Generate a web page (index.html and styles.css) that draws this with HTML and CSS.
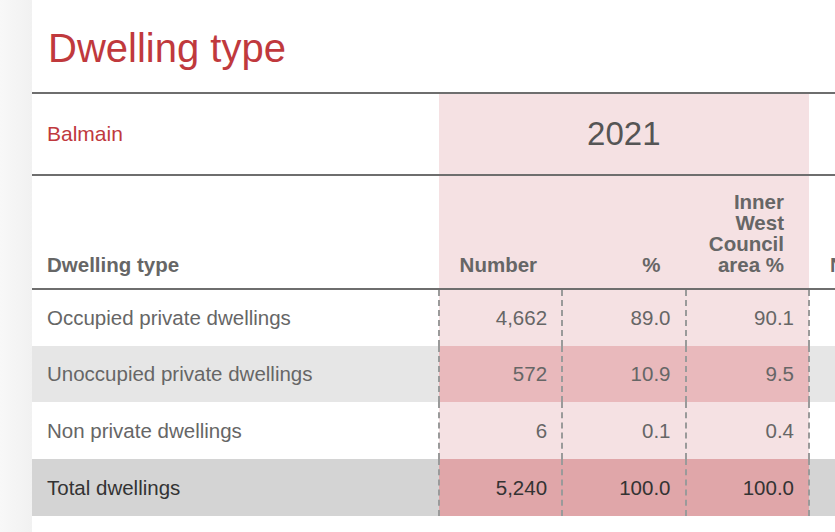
FILE: index.html
```html
<!DOCTYPE html>
<html lang="en">
<head>
<meta charset="utf-8">
<title>Dwelling type</title>
<link rel="stylesheet" href="styles.css">
</head>
<body>
<div class="page">
  <div class="gutter"></div>
  <main class="card">
    <h1 class="title">Dwelling type</h1>
    <table class="data">
      <colgroup>
        <col class="c-label">
        <col class="c-num">
        <col class="c-num">
        <col class="c-num">
        <col class="c-num">
        <col class="c-num">
      </colgroup>
      <thead>
        <tr class="year-row">
          <th class="area">Balmain</th>
          <th class="year" colspan="3">2021</th>
          <th class="year-next" colspan="2"></th>
        </tr>
        <tr class="head-row">
          <th class="label-head">Dwelling type</th>
          <th class="num-head pink">Number</th>
          <th class="num-head pink">%</th>
          <th class="num-head pink">Inner West Council area %</th>
          <th class="num-head">Number</th>
          <th class="num-head">%</th>
        </tr>
      </thead>
      <tbody>
        <tr class="row">
          <td class="label">Occupied private dwellings</td>
          <td class="num">4,662</td>
          <td class="num">89.0</td>
          <td class="num last">90.1</td>
          <td class="num rest"></td>
          <td class="num rest"></td>
        </tr>
        <tr class="row alt">
          <td class="label">Unoccupied private dwellings</td>
          <td class="num">572</td>
          <td class="num">10.9</td>
          <td class="num last">9.5</td>
          <td class="num rest"></td>
          <td class="num rest"></td>
        </tr>
        <tr class="row">
          <td class="label">Non private dwellings</td>
          <td class="num">6</td>
          <td class="num">0.1</td>
          <td class="num last">0.4</td>
          <td class="num rest"></td>
          <td class="num rest"></td>
        </tr>
        <tr class="row total">
          <td class="label">Total dwellings</td>
          <td class="num">5,240</td>
          <td class="num">100.0</td>
          <td class="num last">100.0</td>
          <td class="num rest"></td>
          <td class="num rest"></td>
        </tr>
      </tbody>
    </table>
  </main>
</div>
</body>
</html>
```

FILE: styles.css
```css
* { box-sizing: border-box; }

html, body {
  margin: 0;
  padding: 0;
  background: #ffffff;
}

body {
  font-family: "Liberation Sans", Arial, sans-serif;
  color: #666666;
  overflow: hidden;
}

.page {
  display: flex;
  width: 835px;
  height: 532px;
}

.gutter {
  flex: 0 0 32px;
  background: linear-gradient(to right, #f8f8f8, #f1f1f1);
}

.card {
  flex: 1 1 auto;
  overflow: hidden;
  background: #ffffff;
}

.title {
  margin: 0;
  padding: 25px 0 21px 16px;
  font-size: 40px;
  line-height: 46px;
  font-weight: normal;
  color: #c0393d;
  white-space: nowrap;
}

.data {
  border-collapse: collapse;
  table-layout: fixed;
  width: 1024px;
}

.c-label { width: 405px; }
.c-num { width: 123px; }

.year-row th {
  border-top: 2px solid #6e6e6e;
  border-bottom: 2px solid #6e6e6e;
  height: 82px;
  padding: 0;
  vertical-align: middle;
  font-weight: normal;
}

.area {
  text-align: left;
  padding-left: 15px !important;
  font-size: 21px;
  color: #c0393d;
}

.year {
  background: #f5e1e3;
  text-align: center;
  font-size: 33px;
  color: #555555;
}

.head-row th {
  height: 114px;
  border-bottom: 2px solid #6e6e6e;
  vertical-align: bottom;
  font-size: 20.5px;
  line-height: 21px;
  font-weight: bold;
  color: #666666;
  padding: 0 0 13px 0;
}

.label-head {
  text-align: left;
  padding-left: 15px !important;
}

.num-head {
  text-align: right;
  padding-right: 25px !important;
  padding-left: 10px !important;
  white-space: normal;
}

.num-head.pink { background: #f5e1e3; }

.row td {
  height: 57px;
  padding: 0;
  font-size: 20.5px;
  vertical-align: middle;
  white-space: nowrap;
}

.row.alt td { height: 56px; }

.row .label {
  padding-left: 15px;
  color: #666666;
}

.row .num {
  text-align: right;
  padding-right: 14px;
  background: #f5e1e3;
  color: #666666;
  border-left: 2px dashed #9a9a9a;
}

.row .num.last { border-right: 2px dashed #9a9a9a; }

.row .num.rest {
  background: transparent;
  border-left: none;
}

.row.alt td { background: #e6e6e6; }
.row.alt .num { background: #e9b9bc; }
.row.alt .num.rest { background: #e6e6e6; }

.row.total td { background: #d4d4d4; color: #333333; }
.row.total .num { background: #e0a6a9; color: #333333; }
.row.total .num.rest { background: #d4d4d4; }
```
